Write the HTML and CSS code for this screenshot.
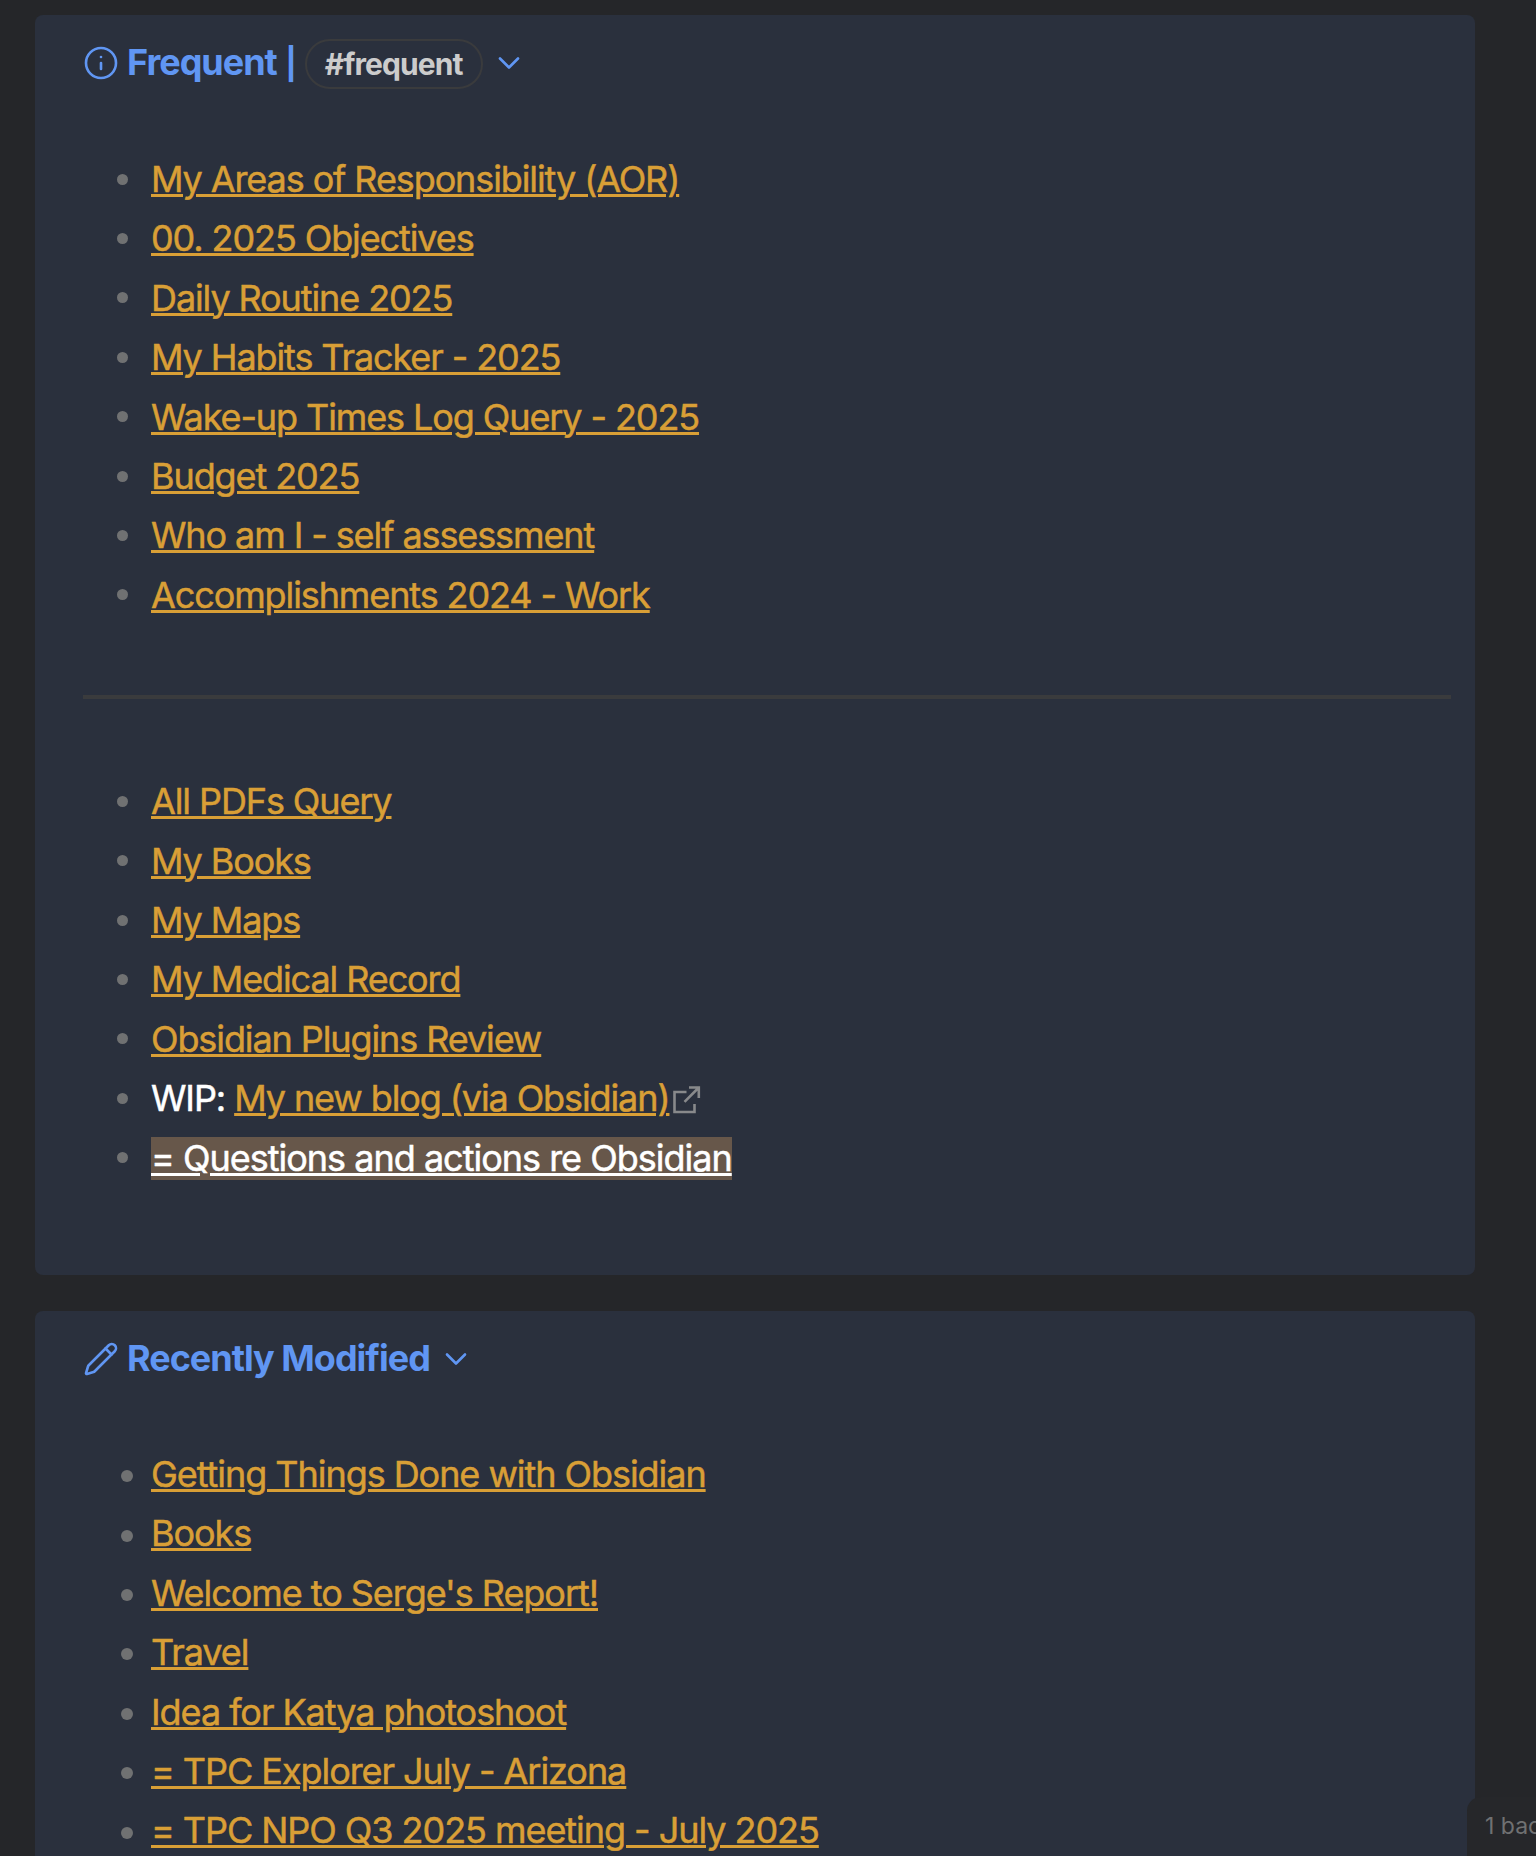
FILE: index.html
```html
<!DOCTYPE html>
<html lang="en">
<head>
  <meta charset="UTF-8" />
  <meta name="viewport" content="width=device-width, initial-scale=1.0" />
  <title>Home</title>
  <link rel="stylesheet" href="styles.css">
</head>
<body>
  <main class="note">
    <section class="callout">
      <header class="callout-title">
        <svg class="icon" viewBox="0 0 24 24"><circle cx="12" cy="12" r="10"/><path d="M12 16v-4"/><path d="M12 8h.01"/></svg>
        <h2>Frequent <span class="bar">|</span></h2>
        <a class="tag" href="#">#frequent</a>
        <svg class="icon fold" viewBox="0 0 24 24"><path d="m6 9 6 6 6-6"/></svg>
      </header>

      <ul class="links">
        <li><a href="#">My Areas of Responsibility (AOR)</a></li>
        <li><a href="#">00. 2025 Objectives</a></li>
        <li><a href="#">Daily Routine 2025</a></li>
        <li><a href="#">My Habits Tracker - 2025</a></li>
        <li><a href="#">Wake-up Times Log Query - 2025</a></li>
        <li><a href="#">Budget 2025</a></li>
        <li><a href="#">Who am I - self assessment</a></li>
        <li><a href="#">Accomplishments 2024 - Work</a></li>
      </ul>

      <hr>

      <ul class="links">
        <li><a href="#">All PDFs Query</a></li>
        <li><a href="#">My Books</a></li>
        <li><a href="#">My Maps</a></li>
        <li><a href="#">My Medical Record</a></li>
        <li><a href="#">Obsidian Plugins Review</a></li>
        <li>WIP: <a href="#">My new blog (via Obsidian)</a><svg class="external" viewBox="0 0 28 28"><path d="M13.5 6h-12v20h20v-8"/><path d="M16 1.5h9.8V12M25.8 1.5 11.5 15.8"/></svg></li>
        <li><a class="highlight" href="#">= Questions and actions re Obsidian</a></li>
      </ul>
    </section>

    <section class="callout">
      <header class="callout-title">
        <svg class="icon" viewBox="0 0 24 24"><path d="M21.174 6.812a1 1 0 0 0-3.986-3.987L3.842 16.174a2 2 0 0 0-.5.83l-1.321 4.352a.5.5 0 0 0 .623.622l4.353-1.32a2 2 0 0 0 .83-.497z"/><path d="m15 5 4 4"/></svg>
        <h2>Recently Modified</h2>
        <svg class="icon fold" viewBox="0 0 24 24"><path d="m6 9 6 6 6-6"/></svg>
      </header>

      <ul class="links recent">
        <li><a href="#">Getting Things Done with Obsidian</a></li>
        <li><a href="#">Books</a></li>
        <li><a href="#">Welcome to Serge's Report!</a></li>
        <li><a href="#">Travel</a></li>
        <li><a href="#">Idea for Katya photoshoot</a></li>
        <li><a href="#">= TPC Explorer July - Arizona</a></li>
        <li><a href="#">= TPC NPO Q3 2025 meeting - July 2025</a></li>
      </ul>
    </section>
  </main>

  <div class="status-bar">1 backlink</div>
</body>
</html>
```

FILE: styles.css
```css
:root {
  --background: #252629;
  --callout: #2a303d;
  --blue: #6096f3;
  --link: #d99f36;
  --border: #3a3b3d;
  --muted: #707172;
}

* {
  box-sizing: border-box;
}

body {
  margin: 0;
  height: 100vh;
  overflow: hidden;
  background: var(--background);
  color: #ffffff;
  font-family: Inter, "Liberation Sans", sans-serif;
  font-size: 36px;
  line-height: 59.4px;
  letter-spacing: -1.1px;
}

.note {
  display: flex;
  flex-direction: column;
  gap: 36px;
  width: 1440px;
  height: 1841px;
  margin: 15px 0 0 35px;
  overflow: hidden;
}

.callout {
  flex: none;
  height: 1260px;
  padding: 18px 24px 0 48px;
  border-radius: 8px;
  background: var(--callout);
}

/* TITLE */
.callout-title {
  display: flex;
  align-items: center;
  height: 60px;
  color: var(--blue);
}

h2 {
  margin: 0 0 0 8px;
  font-size: 36px;
  font-weight: 700;
  letter-spacing: -1px;
}

.bar {
  margin-left: 1px;
  font-size: 31px;
}

.icon {
  width: 36px;
  height: 36px;
  fill: none;
  stroke: currentColor;
  stroke-width: 1.75;
  stroke-linecap: round;
  stroke-linejoin: round;
}

.fold {
  margin-left: 8px;
}

.tag {
  height: 50px;
  margin: 2px 0 0 9px;
  padding: 0 18px;
  border: 2px solid var(--border);
  border-radius: 25px;
  color: #cccccc;
  font-size: 30px;
  font-weight: 700;
  line-height: 47px;
  letter-spacing: -0.9px;
  text-decoration: none;
}

/* LISTS */
.links {
  margin: 0;
  padding: 57px 0 0 68px;
  list-style: none;
  -webkit-text-stroke: 0.5px;
}

.links li {
  display: flex;
  align-items: center;
  height: 59.4px;
  white-space: pre;
}

.links li::before {
  content: "";
  width: 11px;
  height: 11px;
  margin: 0 23px 1px -34px;
  border-radius: 50%;
  background: var(--muted);
}

.links a {
  color: var(--link);
  text-decoration-thickness: 3px;
  text-underline-offset: 2px;
}

.links .highlight {
  background: #67574a;
  color: #ffffff;
  line-height: 43px;
  letter-spacing: -1px;
}

.links.recent {
  padding-top: 56px;
  letter-spacing: -1.05px;
}

.links.recent li::before {
  width: 12px;
  height: 12px;
  margin: 3px 18px 0 -30px;
}

.external {
  width: 28px;
  height: 28px;
  margin: 2px 0 0 4px;
  fill: none;
  stroke: #88898b;
  stroke-width: 2.6;
}

hr {
  height: 4px;
  margin: 70px 0 16px;
  border: 0;
  background: var(--border);
}

/* STATUS BAR */
.status-bar {
  position: fixed;
  right: 0;
  bottom: 0;
  width: 69px;
  height: 59px;
  padding: 9px 0 0 18px;
  overflow: hidden;
  border-radius: 14px 0 0 0;
  background: #26272a;
  color: var(--muted);
  font-size: 23px;
  line-height: 40px;
  letter-spacing: 0;
  white-space: nowrap;
}
```
